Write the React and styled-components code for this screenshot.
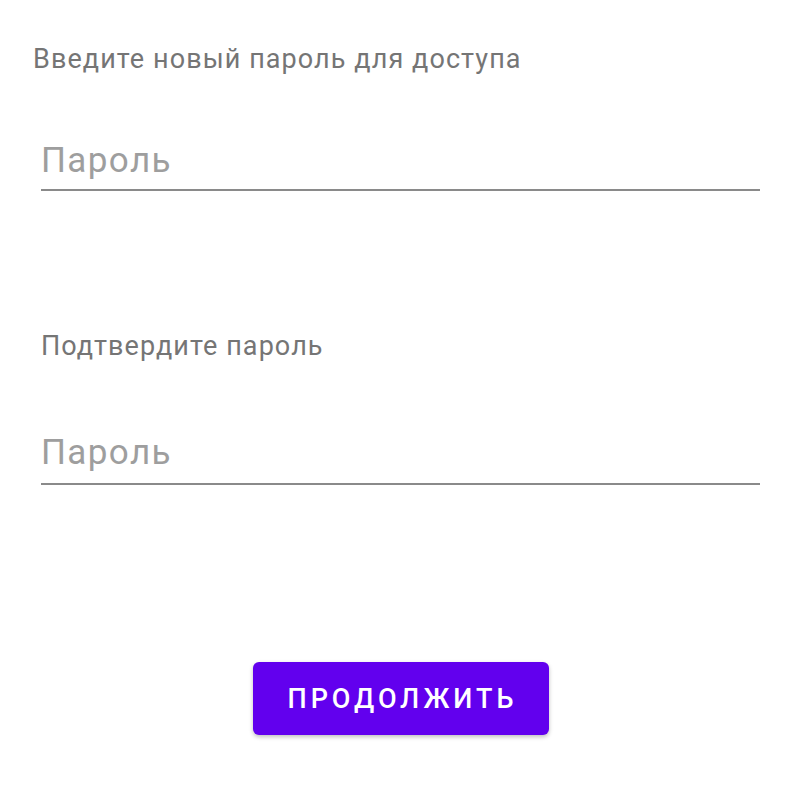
import React from 'react';
import styled, { createGlobalStyle } from 'styled-components';

const GlobalStyle = createGlobalStyle`
  html, body {
    margin: 0;
    padding: 0;
    background: #ffffff;
    font-family: Roboto, "Liberation Sans", Arial, sans-serif;
  }
`;

const Screen = styled.div`
  width: 800px;
  height: 791px;
  box-sizing: border-box;
  padding: 43px 40px 0 33px;
  display: flex;
  flex-direction: column;
`;

const Label = styled.div`
  font-size: 27px;
  line-height: 32px;
  letter-spacing: 0.04em;
  color: #757575;
  margin-left: ${(p) => (p.inset ? '8px' : '0')};
  margin-top: ${(p) => p.top || 0}px;
`;

const Field = styled.div`
  margin-left: 8px;
  margin-top: ${(p) => p.top || 0}px;
  border-bottom: 2px solid #8a8a8a;
  height: 52px;
  box-sizing: content-box;
  display: flex;
  align-items: flex-end;
`;

const Input = styled.input`
  border: none;
  outline: none;
  background: transparent;
  padding: 0;
  margin: 0 0 ${(p) => p.gap || 9}px;
  width: 100%;
  height: 41px;
  line-height: 41px;
  font-family: Roboto, "Liberation Sans", Arial, sans-serif;
  font-size: 35px;
  letter-spacing: 0.04em;
  color: #222;

  &::placeholder {
    color: #9e9e9e;
  }
`;

const Actions = styled.div`
  display: flex;
  justify-content: center;
  margin-top: 177px;
  padding-left: 8px;
`;

const Button = styled.button`
  width: 296px;
  height: 73px;
  padding: 0 0 0 4px;
  border: none;
  border-radius: 6px;
  background: #6200ee;
  color: #ffffff;
  font-family: Roboto, "Liberation Sans", Arial, sans-serif;
  font-weight: 500;
  font-size: 27px;
  letter-spacing: 4px;
  box-shadow: 0 2px 4px rgba(0, 0, 0, 0.25);
  cursor: pointer;
`;

export default function App() {
  return (
    <>
      <GlobalStyle />
      <Screen>
        <Label>Введите новый пароль для доступа</Label>
        <Field top={62}>
          <Input type="password" placeholder="Пароль" gap={8} />
        </Field>
        <Label inset top={139}>Подтвердите пароль</Label>
        <Field top={69}>
          <Input type="password" placeholder="Пароль" gap={10} />
        </Field>
        <Actions>
          <Button>ПРОДОЛЖИТЬ</Button>
        </Actions>
      </Screen>
    </>
  );
}
